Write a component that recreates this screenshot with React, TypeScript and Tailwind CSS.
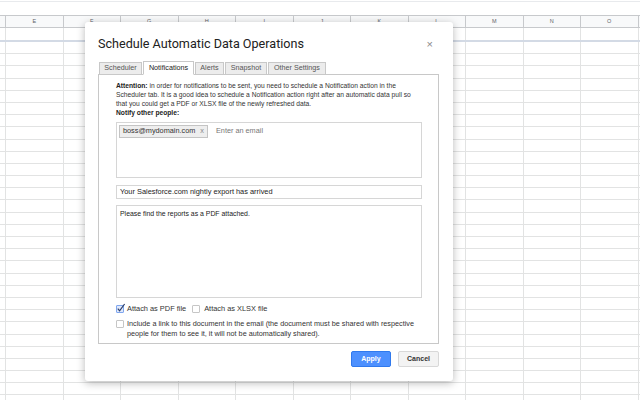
import React from 'react';

const columns = ['E', 'F', 'G', 'H', 'I', 'J', 'K', 'L', 'M', 'N', 'O'];
const rowCount = 30;

const Sheet = () => (
  <div className="absolute inset-0 bg-white">
    <div className="h-[14px] border-t border-[#e8eaed] mt-[1px]" />
    {/* column header */}
    <div className="flex h-[13px] bg-[#f8f9fa] border-y border-[#c7c9cc]">
      <div className="w-[6px] border-r border-[#c7c9cc]" />
      {columns.map((c) => (
        <div
          key={c}
          className="w-[57.5px] shrink-0 border-r border-[#c7c9cc] flex items-center justify-center text-[5.5px] text-[#5f6368]"
        >
          {c}
        </div>
      ))}
    </div>
    <div className="flex h-[12px]">
      <div className="w-[6px] border-r border-[#e2e3e3]" />
      {columns.map((c) => (
        <div key={c} className="w-[57.5px] shrink-0 border-r border-[#e2e3e3]" />
      ))}
    </div>
    <div className="h-[2px] bg-[#d3dae5]" />
    {Array.from({ length: rowCount }).map((_, i) => (
      <div key={i} className="flex h-[12.2px] border-b border-[#e2e3e3]">
        <div className="w-[6px] border-r border-[#e2e3e3]" />
        {columns.map((c) => (
          <div key={c} className="w-[57.5px] shrink-0 border-r border-[#e2e3e3]" />
        ))}
      </div>
    ))}
  </div>
);

const CheckedBox = () => (
  <svg width="10" height="10" viewBox="0 0 10 10" className="shrink-0 -mt-[2px]">
    <rect x="0.5" y="2.5" width="7" height="7" rx="0.5" fill="#dfe8fb" stroke="#7fa6ef" />
    <path d="M1.8 5.6 L3.6 7.8 L8.6 1" fill="none" stroke="#2d3e66" strokeWidth="1.2" />
  </svg>
);

const EmptyBox = () => (
  <span className="block w-[8px] h-[8px] shrink-0 border border-[#c6c6c6] rounded-[1px] bg-white" />
);

const tabs = [
  { label: 'Scheduler', w: 'w-[43px]' },
  { label: 'Notifications', w: 'w-[51px]' },
  { label: 'Alerts', w: 'w-[29px]' },
  { label: 'Snapshot', w: 'w-[42px]' },
  { label: 'Other Settings', w: 'w-[58px]' },
];

export default function App() {
  return (
    <div className="relative w-[640px] h-[400px] overflow-hidden font-['Liberation_Sans',Arial,sans-serif]">
      <Sheet />

      <div className="absolute left-[85px] top-[22px] w-[368px] h-[359px] bg-white rounded-[3px] shadow-[0_2px_8px_rgba(0,0,0,0.28)] pl-[13px] pr-[14px]">
        <div className="mt-[13px] h-[18px] flex items-center justify-between">
          <div className="font-['Roboto',Arial,sans-serif] text-[12.6px] text-[#212121]">
            Schedule Automatic Data Operations
          </div>
          <div className="text-[11px] text-[#8a8a8a] mr-[6px] leading-none">×</div>
        </div>

        <div className="mt-[9px] flex gap-[1px] pl-[1px] h-[13px] relative z-10">
          {tabs.map((t) => {
            const active = t.label === 'Notifications';
            return (
              <div
                key={t.label}
                className={`${t.w} flex items-center justify-center text-[7.2px] border border-[#c8c8c8] ${
                  active
                    ? 'bg-white text-[#222] border-b-white h-[14px] -mt-[1px]'
                    : 'bg-[#ececec] text-[#555] h-[13px]'
                }`}
              >
                {t.label}
              </div>
            );
          })}
        </div>

        <div className="-mt-[1px] h-[270px] border border-[#c8c8c8] pl-[17px] pr-[16px] pt-[6px] text-[6.7px] text-[#333]">
          <div className="leading-[9px]">
            <p>
              <b className="text-[#222]">Attention:</b> in order for notifications to be sent, you need to
              schedule a Notification action in the Scheduler tab. It is a good idea to schedule a
              Notification action right after an automatic data pull so that you could get a PDF or XLSX
              file of the newly refreshed data.
            </p>
            <p className="font-bold text-[#222]">Notify other people:</p>
          </div>

          <div className="mt-[5px] h-[56px] border border-[#d6d6d6] p-[2px] flex items-start gap-[8px] text-[7.3px]">
            <div className="h-[13px] px-[3px] flex items-center gap-[5px] bg-[#eeeeee] border border-[#c4c4c4] text-[#333]">
              <span>boss@mydomain.com</span>
              <span className="text-[#888]">x</span>
            </div>
            <div className="h-[13px] flex items-center text-[#777]">Enter an email</div>
          </div>

          <div className="mt-[7px] h-[14px] border border-[#d6d6d6] px-[3px] flex items-center text-[#222] text-[7.4px]">
            Your Salesforce.com nightly export has arrived
          </div>

          <div className="mt-[6px] h-[93px] border border-[#d6d6d6] px-[3px] pt-[3px] text-[#222] text-[6.9px]">
            Please find the reports as a PDF attached.
          </div>

          <div className="mt-[6px] h-[10px] flex items-center text-[7.4px]">
            <CheckedBox />
            <span className="ml-[1px]">Attach as PDF file</span>
            <span className="ml-[6px]">
              <EmptyBox />
            </span>
            <span className="ml-[4px]">Attach as XLSX file</span>
          </div>

          <div className="mt-[5px] -mr-[4px] flex items-start leading-[10px] text-[7.25px]">
            <span className="mt-[1px]">
              <EmptyBox />
            </span>
            <p className="ml-[3px]">
              Include a link to this document in the email (the document must be shared with respective
              people for them to see it, it will not be automatically shared).
            </p>
          </div>
        </div>

        <div className="mt-[7px] flex justify-end gap-[7px]">
          <button className="w-[40px] h-[16px] bg-[#4d90fe] border border-[#3079ed] rounded-[2px] text-white font-bold text-[7px]">
            Apply
          </button>
          <button className="w-[41px] h-[16px] bg-[#f3f3f3] border border-[#d8d8d8] rounded-[2px] text-[#333] font-bold text-[7px]">
            Cancel
          </button>
        </div>
      </div>
    </div>
  );
}
